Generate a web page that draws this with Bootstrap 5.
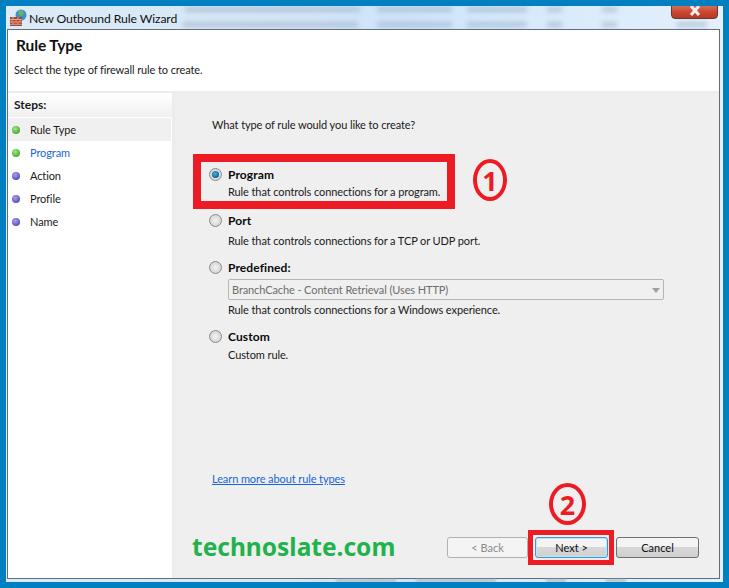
<!DOCTYPE html>
<html lang="en"><head><meta charset="utf-8"><title>New Outbound Rule Wizard</title>
<link href="https://cdn.jsdelivr.net/npm/bootstrap@5.3.0/dist/css/bootstrap.min.css" rel="stylesheet">
<style>
html,body{margin:0;height:588px;overflow:hidden}
body{background:#0080c0;font-family:Lato,"Liberation Sans",sans-serif;font-size:11px;letter-spacing:-.1px;color:#1a1a1a;line-height:15px}
.shot{position:relative;width:729px;height:588px;padding:6px}
.glass{width:717px;height:576px;padding:0 3px 3px 1px;background:linear-gradient(90deg,#dcebf6,#d4e6f8 40%,#cfe4fb 55%,#d8eafc 75%,#e4f0fc);position:relative;overflow:hidden}
.ttl{height:23px;padding-left:2px;font-size:12.2px;color:#111;position:relative}
.ttl span{position:relative;top:.5px}
.smear{position:absolute;background:#8ea3b8;filter:blur(2.5px);height:5px;opacity:.5}
.xbtn{position:absolute;right:2px;top:-5px;width:47px;height:18px;border:1px solid #5f3a36;border-radius:0 0 4px 4px;background:linear-gradient(#e2836c,#c8452f 65%,#b93a26);display:flex;justify-content:center;align-items:flex-start;padding-top:3px}
.frame{height:550px;border:1px solid #646c75;background:#fff;display:flex;flex-direction:column;position:relative}
.hdr{height:63px;padding:6px 0 0 6px;border-bottom:2px solid #ececec;flex:none}
.hdr h1{font:700 15.500px/18px Lato,sans-serif;margin:0 0 0 2px;color:#111}
.hdr p{margin:8px 0 0}
.body-row{flex:1;min-height:0}
.side{width:164px;flex:none;background:#fff}
.steps-h{height:24px;font-weight:700;font-size:12px;letter-spacing:0;padding:4px 0 0 6px;background:linear-gradient(#fff,#f0f0f0);margin-bottom:1px}
.stp{height:23px;padding-left:22px;display:flex;align-items:center;width:163px}
.stp.on{background:#f0f0f0}
.stp.blue{color:#1565d8}
.dot{width:8px;height:8px;border-radius:50%;margin:0 10px 0 -18px;flex:none}
.dot.g{background:radial-gradient(circle at 40% 35%,#a8e58e,#45b030 70%)}
.dot.p{background:radial-gradient(circle at 40% 35%,#a9a3ea,#5a50c0 70%)}
.gap-line{width:3px;background:#ececec;flex:none}
.main{flex:1;background:#efefef;position:relative;padding:24px 0 0 37px;display:flex;flex-direction:column}
.q{margin-bottom:35px}
.opt{display:flex;margin-left:-3px}
.rad{width:13px;height:13px;border-radius:50%;border:1px solid #8a8a8a;background:radial-gradient(circle at 50% 50%,#f4f4f4,#d4d4d4 75%);flex:none;margin:1px 6px 0 0;position:relative}
.rad.sel::after{content:"";position:absolute;left:2px;top:2px;width:7px;height:7px;border-radius:50%;background:radial-gradient(circle at 45% 40%,#4cb4e0,#045c8c 75%)}
.opt b{display:block;color:#0a0a0a;height:18px;font-size:12px;letter-spacing:.1px}
.opt .short{height:17px}
.opt .tall{height:20px}
.opt .mid{height:19px}
.o2{margin-top:14px}.o3{margin-top:12px}.o4{margin-top:12px}
.combo{width:436px;height:21px;border:1px solid #b5b5b5;border-radius:2px;background:#f0f0f0;color:#6d6d6d;padding:2px 3px;margin:0 0 2px;position:relative}
.combo::after{content:"";position:absolute;right:3px;top:8px;border:4px solid transparent;border-top:5px solid #a0a0a0;border-bottom:0}
.lnk{color:#1565d8;text-decoration:underline;position:absolute;left:37px;top:378px}
.wm{position:absolute;left:17px;top:438px;font:700 24.500px/32px "Noto Sans",sans-serif;letter-spacing:0;color:#22b24c}
.foot{position:absolute;top:444px;left:272px}
.wbtn{height:21px;border-radius:3px;border:1px solid #707070;background:linear-gradient(#f4f4f4 45%,#d8d8d8 50%,#cfcfcf);color:#111;font-size:11px;line-height:19px;padding:0;text-align:center}
.wbtn.b1{width:81px;background:#f4f4f4;border-color:#adb2b5;color:#8a8a8a}
.wbtn.b2{width:73px;margin-left:7px;border-color:#3c9ad0;box-shadow:inset 0 0 0 1px #bfe6f8}
.wbtn.b3{width:83px;margin-left:8px}
.redbox{position:absolute;border:solid #ed1c24;pointer-events:none}
.rb1{left:193px;top:154px;width:262px;height:55px;border-width:8px}
.rb2{left:528px;top:530px;width:86px;height:35px;border-width:5px}
.circ{position:absolute;border:4px solid #ed1c24;border-radius:50%;color:#ed1c24;font:700 27px/1 "Noto Sans",sans-serif;letter-spacing:0;display:flex;align-items:center;justify-content:center}
.c1{left:473px;top:159px;width:34px;height:42px}
.c2{left:549px;top:483px;width:37px;height:42px}
.edge{position:absolute;bottom:0;height:3px;background:#a9b0b6;filter:blur(1px);opacity:.7}
</style></head>
<body>
<div class="shot">
 <div class="glass">
  <div class="ttl d-flex align-items-center">
   <svg width="18" height="18" viewBox="0 0 18 18" class="flex-none" style="margin-right:2px"><circle cx="12" cy="6" r="5.500" fill="#3f8fd0"/><path d="M9 2l4-1 2 3-2 3-3-1z" fill="#62bb5a"/><path d="M1 8h12v9H1z" fill="#a8452f"/><path d="M1 10.500h12M1 13h12M1 15.300h12M4 8v2.500M9 8v2.500M3 10.500v2.500M7 10.500v2.500M11 10.500v2.500M4 13v2.500M9 13v2.500" stroke="#e2b8a8" stroke-width=".8" fill="none"/></svg>
   <span>New Outbound Rule Wizard</span>
   <i class="smear" style="left:178px;top:1px;width:175px"></i><i class="smear" style="left:176px;top:16px;width:175px"></i>
   <i class="smear" style="left:370px;top:1px;width:75px"></i><i class="smear" style="left:370px;top:16px;width:75px"></i>
   <i class="smear" style="left:460px;top:1px;width:60px"></i><i class="smear" style="left:460px;top:16px;width:60px"></i>
   <i class="smear" style="left:540px;top:1px;width:15px"></i><i class="smear" style="left:540px;top:16px;width:15px"></i>
   <i class="smear" style="left:595px;top:1px;width:15px"></i><i class="smear" style="left:595px;top:16px;width:15px"></i>
   <i class="smear" style="left:670px;top:16px;width:30px"></i>
   <div class="xbtn"><svg width="12" height="11" viewBox="0 0 12 11"><path d="M2 1l8 9M10 1l-8 9" stroke="#eef0f0" stroke-width="3" fill="none"/></svg></div>
  </div>
  <div class="frame">
   <div class="hdr"><h1>Rule Type</h1><p>Select the type of firewall rule to create.</p></div>
   <div class="d-flex body-row">
    <div class="side">
     <div class="steps-h">Steps:</div>
     <div class="stp on"><i class="dot g"></i>Rule Type</div>
     <div class="stp blue"><i class="dot g"></i>Program</div>
     <div class="stp"><i class="dot p"></i>Action</div>
     <div class="stp"><i class="dot p"></i>Profile</div>
     <div class="stp"><i class="dot p"></i>Name</div>
    </div>
    <div class="gap-line"></div>
    <div class="main">
     <div class="q">What type of rule would you like to create?</div>
     <div class="opt"><i class="rad sel"></i><div><b class="short">Program</b><div>Rule that controls connections for a program.</div></div></div>
     <div class="opt o2"><i class="rad"></i><div><b class="tall">Port</b><div>Rule that controls connections for a TCP or UDP port.</div></div></div>
     <div class="opt o3"><i class="rad"></i><div><b class="mid">Predefined:</b><div class="combo">BranchCache - Content Retrieval (Uses HTTP)</div><div>Rule that controls connections for a Windows experience.</div></div></div>
     <div class="opt o4"><i class="rad"></i><div><b>Custom</b><div>Custom rule.</div></div></div>
     <a class="lnk" href="#">Learn more about rule types</a>
     <div class="wm">technoslate.com</div>
     <div class="foot d-flex">
      <button class="wbtn b1" type="button">&lt; Back</button><button class="wbtn b2" type="button">Next &gt;</button><button class="wbtn b3" type="button">Cancel</button>
     </div>
    </div>
   </div>
  </div>
  <i class="edge" style="left:330px;width:60px"></i><i class="edge" style="left:410px;width:80px"></i><i class="edge" style="left:540px;width:20px"></i><i class="edge" style="left:600px;width:20px"></i>
 </div>
 <div class="redbox rb1"></div>
 <div class="redbox rb2"></div>
 <div class="circ c1">1</div>
 <div class="circ c2">2</div>
</div>
<script src="https://cdn.jsdelivr.net/npm/bootstrap@5.3.0/dist/js/bootstrap.bundle.min.js"></script>
</body></html>
